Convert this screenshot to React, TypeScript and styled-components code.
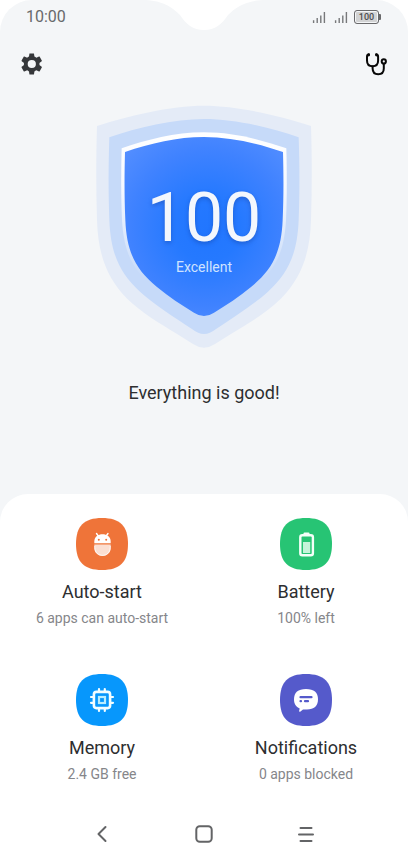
import React from "react";
import styled, { createGlobalStyle } from "styled-components";

const GlobalStyle = createGlobalStyle`
  *, *::before, *::after { box-sizing: border-box; }
  html, body, #root { height: 100%; }
  body {
    margin: 0;
    background: #fff;
    color: #2d2e30;
    font-family: Roboto, "Liberation Sans", sans-serif;
  }
  button { font: inherit; color: inherit; border: 0; padding: 0; background: none; cursor: pointer; }
  svg { display: block; }
`;

const Screen = styled.div`
  min-height: 100%;
  display: flex;
  flex-direction: column;
  background: #f4f6f8;
  border-radius: 32px 32px 0 0;
`;

const StatusBar = styled.header`
  display: grid;
  grid-template-columns: 1fr auto 1fr;
  height: 32px;
  color: #68696b;
`;

const Clock = styled.time`
  padding-left: 26px;
  font-size: 16px;
  line-height: 33px;
`;

const StatusIcons = styled.div`
  display: flex;
  justify-content: flex-end;
  align-items: center;
  gap: 8px;
  padding-right: 29px;
`;

const BatteryLevel = styled.div`
  position: relative;
  width: 25px;
  height: 14px;
  margin-left: -2px;
  border: 1px solid #69696b;
  border-radius: 3px;
  background: #d2d3d4;
  box-shadow: inset 0 0 0 1px #f4f6f8;
  font-size: 9px;
  font-weight: 500;
  line-height: 13px;
  text-align: center;
  color: #4c4d4f;

  &::after {
    content: "";
    position: absolute;
    right: -3px;
    top: 3px;
    width: 2px;
    height: 6px;
    border-radius: 0 1px 1px 0;
    background: #69696b;
  }
`;

const Toolbar = styled.nav`
  display: flex;
  justify-content: space-between;
  align-items: center;
  height: 63px;
  padding: 0 20px;
`;

const IconButton = styled.button`
  width: 24px;
  height: 24px;
`;

const Hero = styled.main`
  flex: 1;
  display: flex;
  flex-direction: column;
  align-items: center;
`;

const ShieldStack = styled.div`
  display: grid;
  width: 240px;
  height: 260px;
  & > * { grid-area: 1 / 1; }
`;

const Score = styled.div`
  z-index: 1;
  padding-top: 85px;
  text-align: center;
  color: #f3f7fd;
`;

const ScoreValue = styled.div`
  font-size: 68px;
  line-height: 76px;
  text-shadow: 0 2px 4px rgba(20, 60, 150, 0.4);
`;

const ScoreLabel = styled.div`
  margin-top: 2px;
  font-size: 14px;
  line-height: 18px;
  color: #cfe3ff;
`;

const Summary = styled.h1`
  margin: 26px 0 0;
  font-size: 18px;
  font-weight: 400;
  line-height: 24px;
`;

const Panel = styled.section`
  display: grid;
  grid-template-columns: 1fr 1fr;
  row-gap: 44px;
  padding: 24px 0 20px;
  border-radius: 28px 28px 0 0;
  background: #fff;
`;

const Tile = styled.button`
  display: flex;
  flex-direction: column;
  align-items: center;
  height: 112px;
`;

const TileTitle = styled.span`
  margin-top: 10px;
  font-size: 18px;
  line-height: 24px;
`;

const TileNote = styled.span`
  margin-top: 4px;
  font-size: 14px;
  line-height: 20px;
  color: #85868a;
`;

const SystemNav = styled.nav`
  display: flex;
  justify-content: center;
  align-items: center;
  gap: 78px;
  height: 55px;
  background: #fff;
`;

const Notch = () => (
  <svg width="124" height="32" viewBox="0 0 124 32" aria-hidden="true">
    <path d="M0 0C20 0 30 7 38 15C44 24 51 30 62 30C73 30 80 24 86 15C94 7 104 0 124 0Z" fill="#fff" />
  </svg>
);

const Signal = () => (
  <svg width="14" height="14" viewBox="0 0 14 14" aria-hidden="true">
    <path d="M1.6 13V10.2M5.2 13V8M8.8 13V5.5M12.4 13V2" stroke="#77787a" strokeWidth="1.4" />
  </svg>
);

const GearIcon = () => (
  <svg width="24" height="24" viewBox="0 0 24 24" fill="#35373a" aria-hidden="true">
    <path d="M19.4 13c.1-.3.1-.7.1-1s0-.7-.1-1l2.3-1.8c.2-.2.3-.4.1-.7l-2.1-3.7c-.1-.2-.4-.3-.7-.2l-2.7 1.1c-.6-.4-1.2-.8-1.9-1.1L14 1.8c0-.3-.2-.4-.5-.4h-3.6c-.3 0-.5.2-.5.4L9 4.6c-.7.3-1.3.7-1.9 1.1L4.4 4.6c-.3-.1-.5 0-.7.2L1.6 8.5c-.1.2-.1.5.1.7L4 11c-.1.3-.1.7-.1 1s0 .7.1 1l-2.3 1.8c-.2.2-.3.4-.1.7l2.1 3.7c.1.2.4.3.7.2l2.7-1.1c.6.4 1.2.8 1.9 1.1l.4 2.8c0 .3.2.4.5.4h3.6c.3 0 .5-.2.5-.4l.4-2.8c.7-.3 1.3-.7 1.9-1.1l2.7 1.1c.3.1.5 0 .7-.2l2.1-3.7c.1-.2.1-.5-.1-.7L19.4 13zM11.8 16.1a4.1 4.1 0 1 1 0-8.2a4.1 4.1 0 0 1 0 8.2z" />
  </svg>
);

const StethoscopeIcon = () => (
  <svg width="24" height="24" viewBox="0 0 24 24" fill="none" stroke="#080808" strokeWidth="2" strokeLinecap="round" aria-hidden="true">
    <path d="M4.8 2.6C3.3 2.6 3 3.2 3 4.7V8.5C3 12.3 5 14.3 8.6 14.3S14.1 12.3 14.1 8.5V4.7C14.1 3.2 13.8 2.6 12.3 2.6" />
    <path d="M4.7 2.6V3.1M12.4 2.6V3.1" strokeWidth="2.6" />
    <path d="M8.6 14.5V16.2C8.6 20 10.6 22.2 14.2 22.2S19.8 20 19.8 16.5V12" />
    <circle cx="19.8" cy="9.4" r="2.1" />
  </svg>
);

const Shield = () => (
  <svg width="240" height="260" viewBox="0 0 720 780" aria-hidden="true">
    <defs>
      <radialGradient id="core" gradientUnits="userSpaceOnUse" cx="370" cy="400" r="330">
        <stop offset="0" stopColor="#2176ff" />
        <stop offset="0.3" stopColor="#2579ff" />
        <stop offset="0.7" stopColor="#3f82ff" />
        <stop offset="1" stopColor="#528dff" />
      </radialGradient>
      <linearGradient id="rim" x1="0" y1="0" x2="0" y2="1">
        <stop offset="0" stopColor="#fff" />
        <stop offset="0.3" stopColor="#f6f9ff" />
        <stop offset="0.8" stopColor="#c6daf9" />
      </linearGradient>
    </defs>
    <path fill="#e4ebf7" d="M360 32C460 32 590 63 681 93C684 190 684 280 681 375C678 480 650 550 592 610C550 651 495 685 442 716L393 747Q360 769 327 747L278 716C225 685 170 651 128 610C70 550 42 480 39 375C36 280 36 190 39 93C130 63 260 32 360 32Z" />
    <path fill="#c6daf9" d="M360 72C450 72 560 97 644 127C647 220 647 290 644 375C640 480 610 537 552 590C510 628 450 666 395 703Q360 731 325 703C270 666 210 628 168 590C110 537 80 480 76 375C73 290 73 220 76 127C160 97 270 72 360 72Z" />
    <path fill="url(#rim)" d="M360 112C450 112 530 134 607 160C609 240 609 310 606 375C600 480 570 527 510 577C470 610 430 634 390 656Q360 672 330 656C290 634 250 610 210 577C150 527 120 480 114 375C111 310 111 240 113 160C190 134 270 112 360 112Z" />
    <path fill="url(#core)" d="M360 126C440 126 520 145 597 171C599 245 599 310 596 375C592 475 562 526 502 575C465 605 428 630 390 653Q360 673 330 653C292 630 255 605 218 575C158 526 128 475 124 375C121 310 121 245 123 171C200 145 280 126 360 126Z" />
  </svg>
);

const squircle = "M26 0C44 0 52 8 52 26S44 52 26 52S0 44 0 26S8 0 26 0Z";

const Badge = ({ color, children }: { color: string; children: React.ReactNode }) => (
  <svg width="52" height="52" viewBox="0 0 52 52" aria-hidden="true">
    <path d={squircle} fill={color} />
    {children}
  </svg>
);

const tiles = [
  {
    title: "Auto-start",
    note: "6 apps can auto-start",
    color: "#ef7439",
    art: (
      <>
        <path d="M20.5 15.5L22.7 18.5M32 15.5L29.8 18.5" stroke="#fff" strokeWidth="1.4" strokeLinecap="round" />
        <path d="M18.3 25.2V23.5C18.3 13.8 34.7 13.8 34.7 23.5V25.2Z" fill="#fff" />
        <circle cx="22.8" cy="21.8" r="1" fill="#ef7439" />
        <circle cx="30.2" cy="21.8" r="1" fill="#ef7439" />
        <path d="M18.3 26.5H34.7V29.5C34.7 40.8 18.3 40.8 18.3 29.5Z" fill="#fbdfd2" />
        <path d="M18.8 28V29.5C18.8 40 34.2 40 34.2 29.5V28" fill="none" stroke="#fff" strokeWidth="0.8" />
      </>
    ),
  },
  {
    title: "Battery",
    note: "100% left",
    color: "#27c474",
    art: (
      <>
        <rect x="23.5" y="14.5" width="6" height="3" rx="1" fill="#f4fff8" />
        <rect x="20.3" y="17.3" width="12.6" height="20" rx="2" fill="none" stroke="#f4fff8" strokeWidth="2.4" />
        <rect x="23" y="24" width="7.2" height="11" fill="#c5f4d9" />
      </>
    ),
  },
  {
    title: "Memory",
    note: "2.4 GB free",
    color: "#0797fc",
    art: (
      <g fill="none" stroke="#f2fdff" strokeWidth="2.2" strokeLinecap="round">
        <rect x="17.9" y="17.9" width="16.2" height="16.2" rx="2.5" strokeWidth="2.6" />
        <path d="M23 17V15M28.8 17V15M23 37V35M28.8 37V35M17 23H15M17 28.8H15M37 23H35M37 28.8H35" />
        <rect x="23" y="23" width="6" height="6" stroke="#b8edff" />
      </g>
    ),
  },
  {
    title: "Notifications",
    note: "0 apps blocked",
    color: "#555acb",
    art: (
      <>
        <path d="M26 15C34 15 38 18.5 38 25.3S34 35.5 27 35.5H23L20.5 37.5C19.5 38.2 19 37.5 19.2 36.5L19.7 34.4C16 32.8 14 30 14 25.3C14 18.5 18 15 26 15Z" fill="#fff" />
        <path d="M20.5 23.2H31.5M20.5 27.2H21M25 27.2H28" stroke="#555acb" strokeWidth="2.2" strokeLinecap="round" />
      </>
    ),
  },
];

export default function App() {
  return (
    <>
      <GlobalStyle />
      <Screen>
        <StatusBar>
          <Clock>10:00</Clock>
          <Notch />
          <StatusIcons>
            <Signal />
            <Signal />
            <BatteryLevel>100</BatteryLevel>
          </StatusIcons>
        </StatusBar>
        <Toolbar>
          <IconButton aria-label="Settings"><GearIcon /></IconButton>
          <IconButton aria-label="Diagnostics"><StethoscopeIcon /></IconButton>
        </Toolbar>
        <Hero>
          <ShieldStack>
            <Shield />
            <Score>
              <ScoreValue>100</ScoreValue>
              <ScoreLabel>Excellent</ScoreLabel>
            </Score>
          </ShieldStack>
          <Summary>Everything is good!</Summary>
        </Hero>
        <Panel>
          {tiles.map((tile) => (
            <Tile key={tile.title}>
              <Badge color={tile.color}>{tile.art}</Badge>
              <TileTitle>{tile.title}</TileTitle>
              <TileNote>{tile.note}</TileNote>
            </Tile>
          ))}
        </Panel>
        <SystemNav>
          <IconButton aria-label="Back">
            <svg width="24" height="24" viewBox="0 0 24 24" fill="none" stroke="#636466" strokeWidth="2" strokeLinecap="round" strokeLinejoin="round">
              <path d="M15.5 5L8.5 12L15.5 19" />
            </svg>
          </IconButton>
          <IconButton aria-label="Home">
            <svg width="24" height="24" viewBox="0 0 24 24" fill="none" stroke="#636466" strokeWidth="2">
              <rect x="4.3" y="4.3" width="15.4" height="15.4" rx="3.5" />
            </svg>
          </IconButton>
          <IconButton aria-label="Recent apps">
            <svg width="24" height="24" viewBox="0 0 24 24" fill="none" stroke="#636466" strokeWidth="2" strokeLinecap="round">
              <path d="M6.5 6H17.5M5 12.5H19M6.5 19H17.5" />
            </svg>
          </IconButton>
        </SystemNav>
      </Screen>
    </>
  );
}
